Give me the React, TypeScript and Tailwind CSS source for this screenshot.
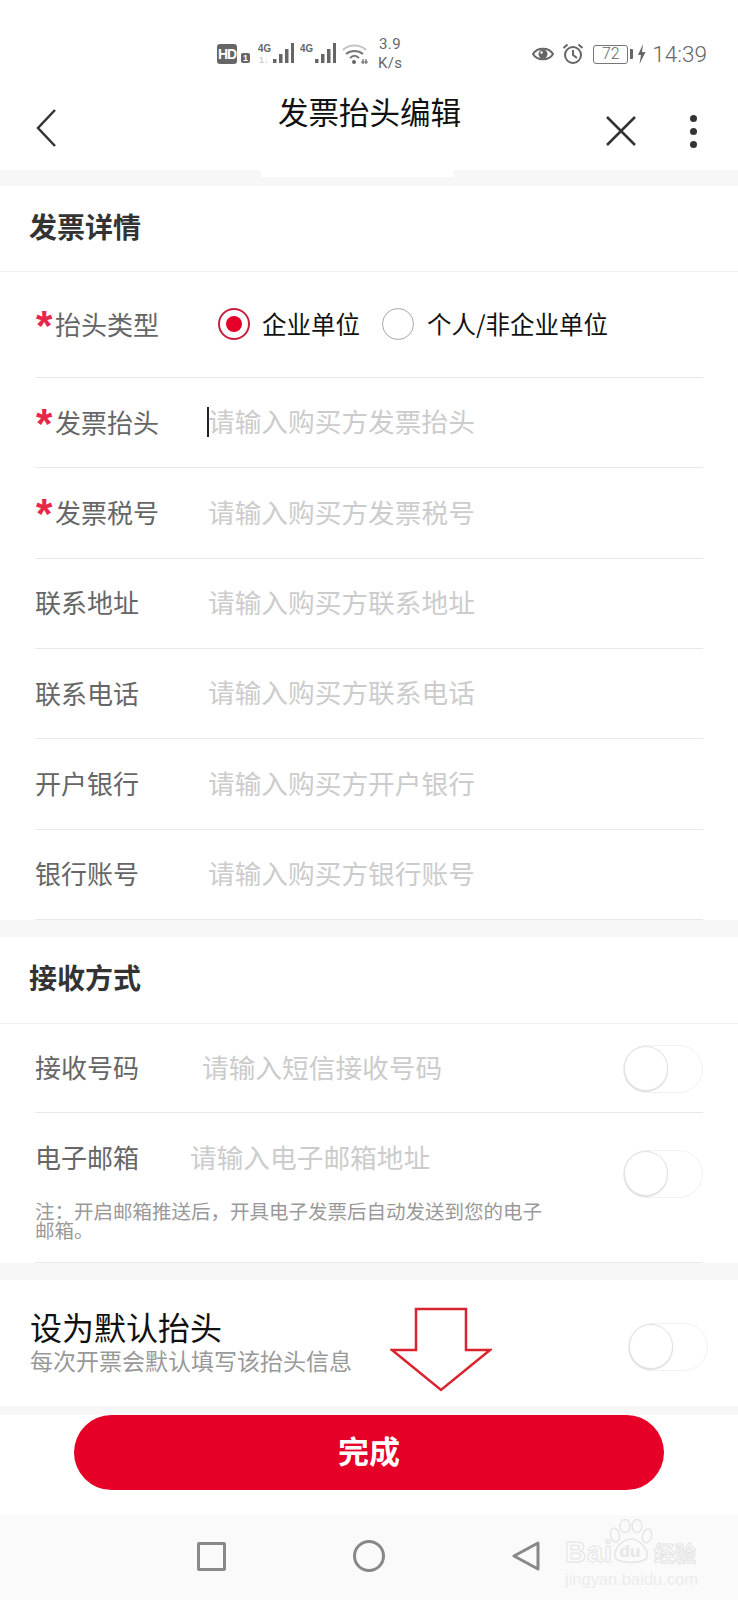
import React from 'react';

const cjk = { fontFamily: '"Noto Sans CJK SC", "Noto Sans", sans-serif' };
const latin = { fontFamily: '"Liberation Sans", sans-serif' };
const roboto = { fontFamily: 'Roboto, sans-serif' };

const Switch: React.FC<{ className?: string }> = ({ className = '' }) => (
  <div className={`relative h-[48px] w-[80px] shrink-0 rounded-full border border-[#f1f1f1] bg-white ${className}`}>
    <div className="absolute left-0 top-0 h-[45px] w-[44px] rounded-full border border-[#e2e2e2] bg-white shadow-[0_1px_1px_rgba(0,0,0,0.12)]" />
  </div>
);

const Signal: React.FC<{ sub?: boolean }> = ({ sub }) => (
  <svg width="36" height="22" viewBox="0 0 36 22" fill="#666">
    <text x="0" y="9" fontSize="10" fontWeight="700" fontFamily="Liberation Sans" textLength="13" lengthAdjust="spacingAndGlyphs">4G</text>
    {sub && <text x="1" y="20" fontSize="9" fontWeight="700" fontFamily="Liberation Sans" fill="#ccc">1↓</text>}
    <rect x="15" y="16" width="3.5" height="4" />
    <rect x="21" y="11" width="3.5" height="9" />
    <rect x="27" y="6" width="3.5" height="14" />
    <rect x="33" y="0" width="3" height="20" />
  </svg>
);

const StatusBar = () => (
  <div className="flex h-[80px] items-center pl-[217px] pr-[31px] pt-[28px] text-[#666]">
    <div className="flex h-[20px] w-[20px] items-center justify-center rounded-[3px] bg-[#666] text-[14px] font-bold leading-none tracking-[-1px] text-white" style={latin}>
      HD
    </div>
    <div className="ml-[4px] mt-[8px] flex h-[10px] w-[9px] items-center justify-center rounded-[2px] bg-[#666] text-[9px] font-bold leading-none text-white" style={latin}>
      1
    </div>
    <div className="ml-[8px] flex gap-[6px]">
      <Signal sub />
      <Signal />
    </div>
    <svg className="ml-[6px]" width="26" height="22" viewBox="0 0 26 22" fill="none" stroke="#777" strokeWidth="2">
      <path d="M1 7 C7 1 18 1 24 7" stroke="#c4c4c4" />
      <path d="M4 11 C9 7 16 7 21 11" />
      <path d="M8 15 C11 12 14 12 17 15" />
      <circle cx="12" cy="19" r="2" fill="#666" stroke="none" />
      <path d="M19 19 h7 M21 16 v5 M24 16 v5" strokeWidth="1.2" stroke="#666" />
    </svg>
    <div className="ml-[10px] w-[24px] text-center text-[15px] leading-[19px] tracking-wide" style={roboto}>
      3.9
      <br />
      K/s
    </div>
    <div className="ml-auto flex items-center">
      <svg width="22" height="16" viewBox="0 0 22 16" fill="none">
        <path d="M1 8 C5 1 17 1 21 8 C17 15 5 15 1 8 Z" stroke="#666" strokeWidth="2" />
        <circle cx="11" cy="8" r="4.5" fill="#666" />
        <circle cx="9.5" cy="6.5" r="1.2" fill="#fff" />
      </svg>
      <svg className="ml-[8px]" width="22" height="22" viewBox="0 0 22 22" fill="none" stroke="#666" strokeWidth="2">
        <circle cx="11" cy="12" r="8" />
        <path d="M11 7 V12 L15 15 M1.5 5 L5.5 1.5 M20.5 5 L16.5 1.5" />
      </svg>
      <div className="ml-[9px] flex h-[19px] w-[35px] items-center justify-center rounded-[3px] border border-[#777] text-[16px] font-light leading-none" style={roboto}>
        72
      </div>
      <div className="ml-[2px] h-[10px] w-[3px] rounded-r-[1px] bg-[#666]" />
      <svg className="ml-[4px]" width="9" height="20" viewBox="0 0 9 20" fill="#666">
        <path d="M6 0 L1 11 H4 L2.5 20 L8.5 8 H5 Z" />
      </svg>
      <span className="ml-[6px] text-[22.5px] font-light leading-none" style={roboto}>14:39</span>
    </div>
  </div>
);

const NavBar = () => (
  <div className="grid h-[90px] grid-cols-[1fr_auto_1fr] items-center bg-white pb-[10px] pl-[36px] pr-[41px] pt-[8px]">
    <svg width="20" height="40" viewBox="0 0 20 40" fill="none" stroke="#333" strokeWidth="2.5" className="mt-[8px] justify-self-start">
      <path d="M19 2 L2 20 L19 38" />
    </svg>
    <div className="ml-[6px] self-start pt-[8px] text-[30.5px] leading-none text-[#111]">发票抬头编辑</div>
    <div className="mt-[14px] flex items-center gap-[53px] justify-self-end">
      <svg width="32" height="32" viewBox="0 0 32 32" stroke="#333" strokeWidth="2.5">
        <path d="M2 2 L30 30 M30 2 L2 30" />
      </svg>
      <div className="flex flex-col gap-[6px]">
        <div className="h-[7px] w-[7px] rounded-full bg-[#333]" />
        <div className="h-[7px] w-[7px] rounded-full bg-[#333]" />
        <div className="h-[7px] w-[7px] rounded-full bg-[#333]" />
      </div>
    </div>
  </div>
);

const Band: React.FC<{ h: string; notch?: boolean }> = ({ h, notch }) => (
  <div className={`bg-[#f7f7f7] ${h}`}>
    {notch && <div className="ml-[261px] h-[7px] w-[193px] bg-white" />}
  </div>
);

const SectionTitle: React.FC<{ children: React.ReactNode; h: string }> = ({ children, h }) => (
  <div className={`flex items-center border-b border-[#eeeeee] pb-[5px] pl-[29px] text-[28px] font-bold leading-none text-[#333] ${h}`}>
    {children}
  </div>
);

const Label: React.FC<{ text: string; required?: boolean }> = ({ text, required }) => (
  <div className="flex shrink-0 items-center text-[26px] leading-none text-[#666]">
    {required && <span className="ml-[1px] mt-[4px] w-[19px] text-[42px] font-bold leading-[26px] text-[#e8264a]" style={latin}>*</span>}
    {text}
  </div>
);

const FieldRow: React.FC<{ label: string; hint: string; required?: boolean; cursor?: boolean }> = ({ label, hint, required, cursor }) => (
  <div className="flex h-[90.33px] items-center border-b border-[#e9e9e9] pb-[2px]">
    <div className={cursor ? 'w-[172px]' : 'w-[174px]'}>
      <Label text={label} required={required} />
    </div>
    {cursor && <div className="h-[30px] w-[2px] bg-[#222]" />}
    <div className="-ml-[1px] text-[26.7px] leading-none text-[#cccccc]">{hint}</div>
  </div>
);

const Watermark = () => (
  <div className="absolute right-[42px] top-[5px] w-[131px]" style={latin}>
    <div className="flex h-[46px] items-end justify-between pb-[1px]">
      <span className="text-[29px] font-bold leading-[26px] tracking-[1px] text-[#fbfbfb] [-webkit-text-stroke:1px_#e4e4e4]">Bai</span>
      <div className="relative -ml-[6px] h-[46px] w-[44px]">
        <svg className="absolute inset-0" width="44" height="46" viewBox="0 0 44 46" fill="none" stroke="#e6e6e6" strokeWidth="1.5">
          <ellipse cx="6" cy="16" rx="4.5" ry="7" transform="rotate(-15 6 16)" />
          <ellipse cx="16" cy="7" rx="5" ry="6.5" />
          <ellipse cx="28" cy="7" rx="5" ry="6.5" />
          <ellipse cx="38" cy="17" rx="4.5" ry="7" transform="rotate(15 38 17)" />
          <path d="M22 20 C14 20 4 30 6 38 C8 45 36 45 38 38 C40 30 30 20 22 20 Z" />
        </svg>
        <span className="absolute bottom-[5px] left-[11px] text-[17px] font-bold leading-none text-[#e6e6e6]">du</span>
      </div>
      <span className="text-[21px] font-bold leading-[26px] text-[#fbfbfb] [-webkit-text-stroke:1px_#e4e4e4]" style={cjk}>经验</span>
    </div>
    <div className="mt-[5px] text-center text-[16.5px] leading-none text-[#ececec]">jingyan.baidu.com</div>
  </div>
);

export default function App() {
  return (
    <div className="relative h-[1600px] w-[738px] overflow-hidden bg-white" style={cjk}>
      <StatusBar />
      <NavBar />
      <Band h="h-[16px]" notch />

      <SectionTitle h="h-[86px]">发票详情</SectionTitle>
      <div className="pl-[35px] pr-[35px]">
        <div className="flex h-[106px] items-center border-b border-[#e9e9e9] pb-[1px]">
          <div className="w-[183px]">
            <Label text="抬头类型" required />
          </div>
          <div className="flex h-[32px] w-[32px] items-center justify-center rounded-full border-2 border-[#c8203c]">
            <div className="h-[16px] w-[16px] rounded-full bg-[#e60027]" />
          </div>
          <span className="ml-[12px] text-[24.5px] leading-none text-[#111]">企业单位</span>
          <div className="ml-[22px] h-[32px] w-[32px] rounded-full border border-[#aaaaaa]" />
          <span className="ml-[13px] text-[24.5px] leading-none text-[#111]">个人/非企业单位</span>
        </div>
        <FieldRow label="发票抬头" hint="请输入购买方发票抬头" required cursor />
        <FieldRow label="发票税号" hint="请输入购买方发票税号" required />
        <FieldRow label="联系地址" hint="请输入购买方联系地址" />
        <FieldRow label="联系电话" hint="请输入购买方联系电话" />
        <FieldRow label="开户银行" hint="请输入购买方开户银行" />
        <FieldRow label="银行账号" hint="请输入购买方银行账号" />
      </div>
      <Band h="h-[17px]" />

      <SectionTitle h="h-[87px]">接收方式</SectionTitle>
      <div className="pl-[35px] pr-[35px]">
        <div className="flex h-[89px] items-center border-b border-[#e9e9e9] pb-[2px]">
          <div className="w-[167px]">
            <Label text="接收号码" />
          </div>
          <div className="text-[26.7px] leading-none text-[#cccccc]">请输入短信接收号码</div>
          <Switch className="ml-auto mt-[4px]" />
        </div>
        <div className="h-[150px] border-b border-[#e9e9e9] pt-[31px]">
          <div className="flex">
            <div className="w-[155px]">
              <Label text="电子邮箱" />
            </div>
            <div className="text-[26.7px] leading-none text-[#cccccc]">请输入电子邮箱地址</div>
            <Switch className="ml-auto mt-[6px]" />
          </div>
          <div className="mt-[3px] w-[512px] text-[19.5px] leading-[19px] text-[#999]">注：开启邮箱推送后，开具电子发票后自动发送到您的电子邮箱。</div>
        </div>
      </div>
      <Band h="h-[17px]" />

      <div className="flex h-[126px] items-center justify-between pl-[30px] pr-[30px]">
        <div className="-mt-[2px]">
          <div className="text-[32px] leading-[34px] text-[#111]">设为默认抬头</div>
          <div className="mt-[3px] text-[23px] leading-[28px] text-[#999]">每次开票会默认填写该抬头信息</div>
        </div>
        <Switch className="mt-[9px]" />
      </div>
      <Band h="h-[9px]" />

      <div className="h-[100px] px-[74px]">
        <button className="flex h-[75px] w-full items-center justify-center rounded-full bg-[#e60027] pb-[5px] text-[31px] font-bold leading-none text-white">
          完成
        </button>
      </div>

      <div className="relative flex h-[85px] items-start bg-[#fafafa] pl-[197px] pt-[27px]">
        <div className="h-[29px] w-[29px] rounded-[2px] border-[3px] border-[#888]" />
        <div className="ml-[127px] h-[32px] w-[32px] -translate-y-[2px] rounded-full border-[3px] border-[#888]" />
        <svg className="ml-[127px] -translate-y-[1px]" width="28" height="30" viewBox="0 0 28 30" fill="none" stroke="#888" strokeWidth="3" strokeLinejoin="round">
          <path d="M26 2 L2 15 L26 28 Z" />
        </svg>
        <Watermark />
      </div>

      {/* annotation arrow drawn on top of the screenshot */}
      <svg className="absolute left-[390px] top-[1307px]" width="102" height="85" viewBox="0 0 102 85" fill="#fff" stroke="#d9232e" strokeWidth="2.5">
        <path d="M26 2 H76 V43 H100 L51 83 L2 43 H26 Z" />
      </svg>
    </div>
  );
}
